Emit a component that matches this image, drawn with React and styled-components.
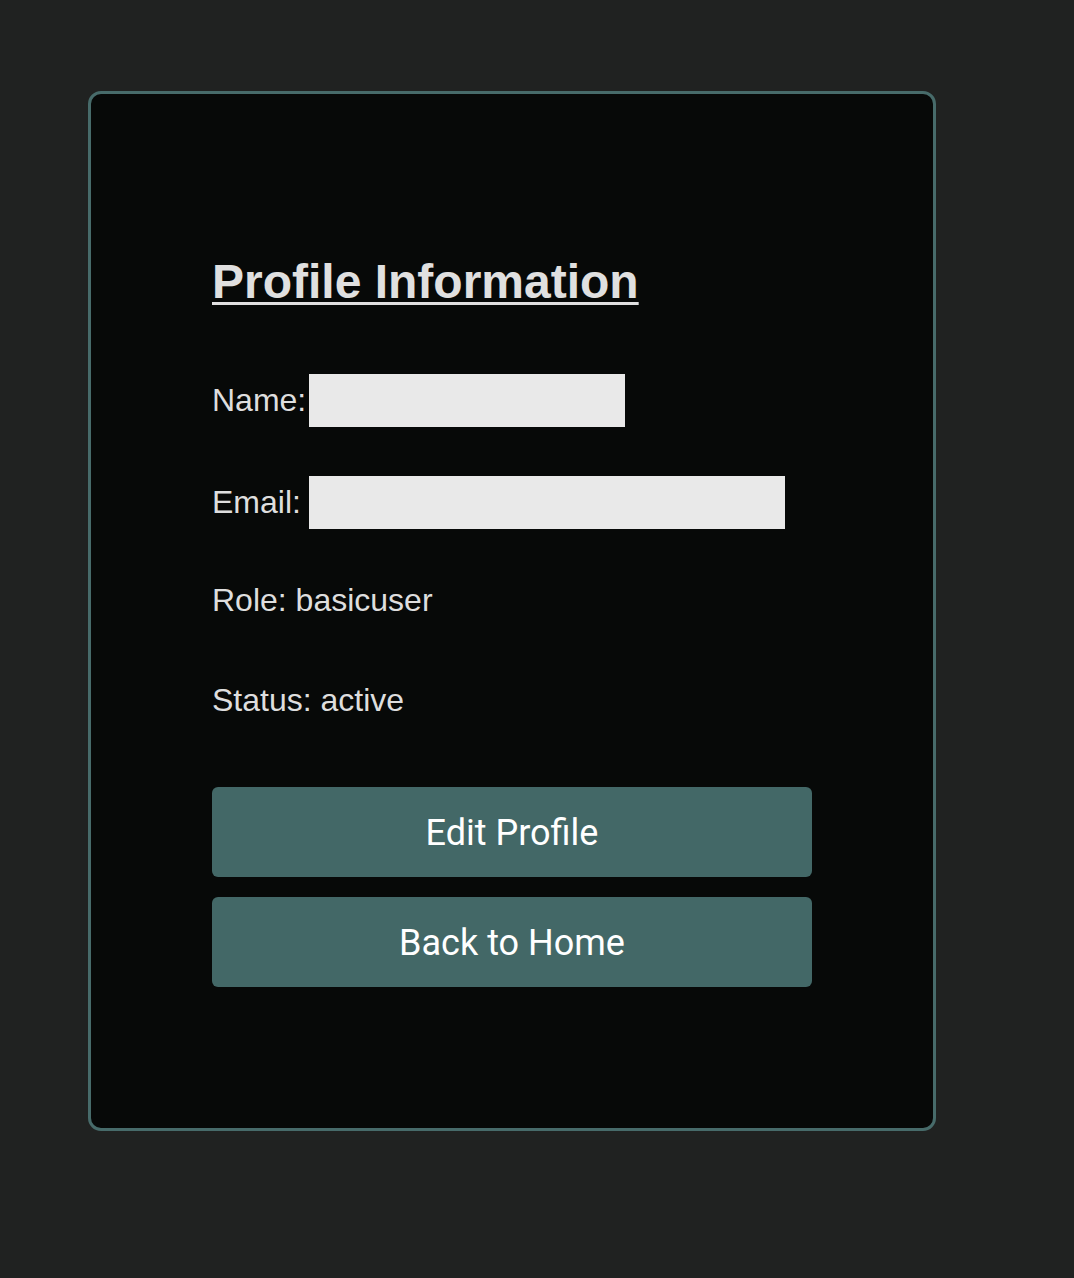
import React from 'react'
import styled, { createGlobalStyle } from 'styled-components';

const GlobalStyle = createGlobalStyle`
    html, body {
        margin: 0;
        padding: 0;
        background-color: #202221;
        min-height: 100%;
    }
    #root {
        min-height: 1278px;
    }
`

const fields = [
    { label: 'Name:', hidden: 316 },
    { label: 'Email:', hidden: 476, shift: 2 },
    { label: 'Role: basicuser' },
    { label: 'Status: active' },
];

function App() {
    return (
        <>
            <GlobalStyle />
            <Page>
                <Card>
                    <Content>
                        <Title>Profile Information</Title>
                        <Fields>
                            {
                                fields.map((field, index) => (
                                    <Field key={index} $shift={field.shift || 0}>
                                        <Label $fixed={!!field.hidden}>{field.label}</Label>
                                        {field.hidden && <Redacted $width={field.hidden} />}
                                    </Field>
                                ))
                            }
                        </Fields>
                        <Actions>
                            <Button>Edit Profile</Button>
                            <Button>Back to Home</Button>
                        </Actions>
                    </Content>
                </Card>
            </Page>
        </>
    )
}

const Page = styled.div`
    display: flex;
    align-items: flex-start;
    padding: 91px 0 0 88px;
    min-height: 1278px;
    box-sizing: border-box;
    background-color: #202221;
`

const Card = styled.div`
    width: 848px;
    box-sizing: border-box;
    background-color: #070908;
    border: 3px solid #476b6a;
    border-radius: 13px;
    padding: 160px 0 141px;
    display: flex;
    justify-content: center;
`

const Content = styled.div`
    width: 600px;
    display: flex;
    flex-direction: column;
`

const Title = styled.h1`
    margin: 0;
    font-family: "Liberation Sans", Arial, sans-serif;
    font-weight: bold;
    font-size: 48px;
    color: #e0e0e0;
    text-decoration: underline;
    text-decoration-thickness: 3px;
    text-underline-offset: 4px;
`

const Fields = styled.div`
    display: flex;
    flex-direction: column;
    gap: 47px;
    margin-top: 65px;
`

const Field = styled.div`
    display: flex;
    align-items: center;
    height: 53px;
    transform: translateY(${props => props.$shift}px);
`

const Label = styled.span`
    font-family: "Liberation Sans", Arial, sans-serif;
    font-size: 32px;
    color: #dedede;
    white-space: pre;
    min-width: ${props => props.$fixed ? '97px' : 'auto'};
`

const Redacted = styled.div`
    width: ${props => props.$width}px;
    height: 53px;
    background-color: #e9e9e9;
`

const Actions = styled.div`
    display: flex;
    flex-direction: column;
    gap: 20px;
    margin-top: 60px;
`

const Button = styled.button`
    height: 90px;
    width: 100%;
    padding: 2px 0 0;
    border: none;
    border-radius: 6px;
    background-color: #436867;
    color: #ffffff;
    font-family: Roboto, "Noto Sans", sans-serif;
    font-size: 36px;
    cursor: pointer;
`

export default App
